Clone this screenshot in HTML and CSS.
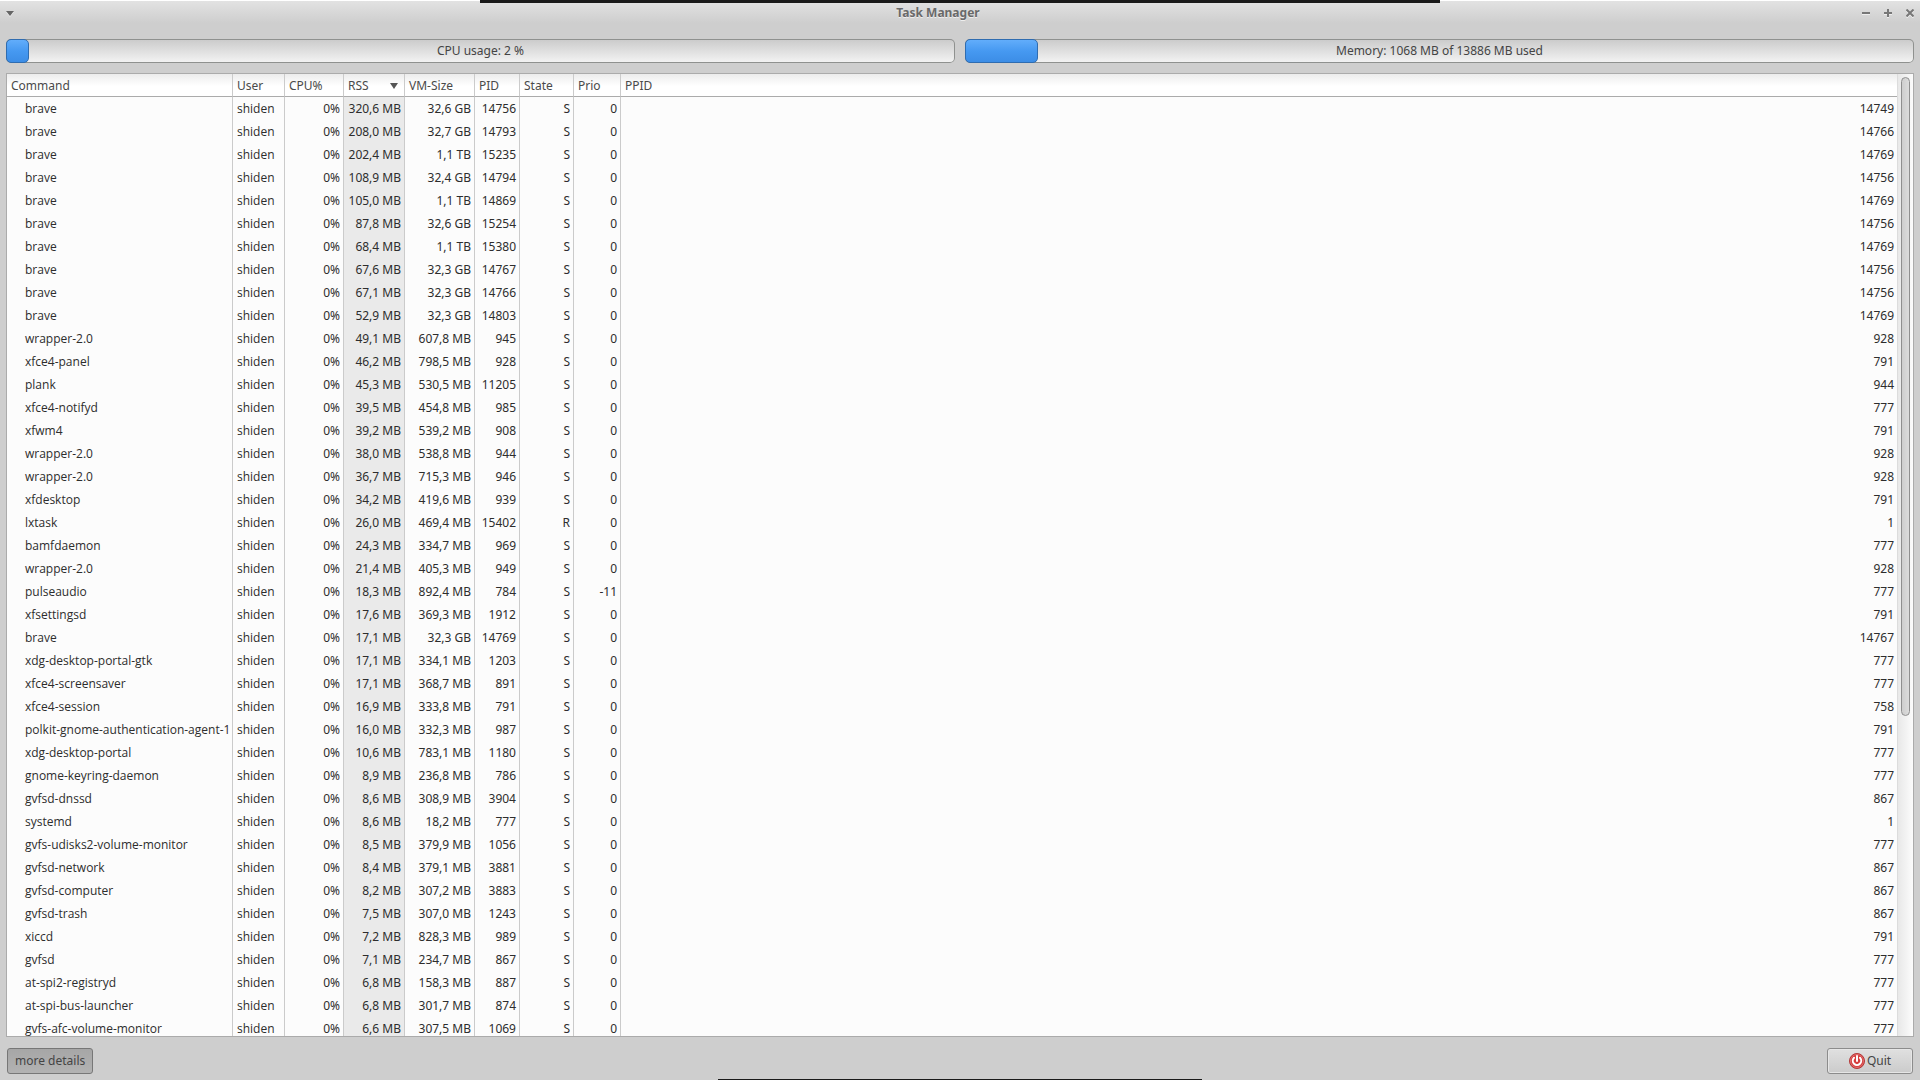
FILE: index.html
```html
<!DOCTYPE html>
<html lang="en">
<head>
<meta charset="utf-8">
<title>Task Manager</title>
<link rel="stylesheet" href="styles.css">
</head>
<body>
<div class="window">
  <header class="titlebar">
    <button class="tb-btn" aria-label="Window menu"><svg width="8" height="5" viewBox="0 0 8 5"><path d="M0 0h8L4 5z" fill="#666"/></svg></button>
    <h1 class="title">Task Manager</h1>
    <div class="tb-group">
      <button class="tb-btn" aria-label="Minimize"><svg width="8" height="8" viewBox="0 0 8 8"><path d="M0 4h8" stroke="#777" stroke-width="2"/></svg></button>
      <button class="tb-btn" aria-label="Maximize"><svg width="8" height="8" viewBox="0 0 8 8"><path d="M0 4h8M4 0v8" stroke="#777" stroke-width="2"/></svg></button>
      <button class="tb-btn" aria-label="Close"><svg width="8" height="8" viewBox="0 0 8 8"><path d="M.5.5l7 7M7.500.5l-7 7" stroke="#777" stroke-width="2"/></svg></button>
    </div>
  </header>
  <section class="meters">
    <div class="meter"><progress class="bar" id="cpu" max="100" value="2.4"></progress><label class="meter-label" for="cpu">CPU usage: 2 %</label></div>
    <div class="meter"><progress class="bar" id="mem" max="13886" value="1068"></progress><label class="meter-label" for="mem">Memory: 1068 MB of 13886 MB used</label></div>
  </section>
  <main class="list">
    <div class="list-view">
      <table class="procs">
        <colgroup><col class="c-cmd"><col class="c-user"><col class="c-cpu"><col class="c-rss"><col class="c-vm"><col class="c-pid"><col class="c-state"><col class="c-prio"><col></colgroup>
        <thead><tr><th>Command</th><th>User</th><th>CPU%</th><th><span class="sorted">RSS <svg width="8" height="6" viewBox="0 0 8 6"><path d="M0 0h8L4 6z" fill="#555"/></svg></span></th><th>VM-Size</th><th>PID</th><th>State</th><th>Prio</th><th>PPID</th></tr></thead>
        <tbody>
<tr><td>brave</td><td>shiden</td><td>0%</td><td>320,6 MB</td><td>32,6 GB</td><td>14756</td><td>S</td><td>0</td><td>14749</td></tr>
<tr><td>brave</td><td>shiden</td><td>0%</td><td>208,0 MB</td><td>32,7 GB</td><td>14793</td><td>S</td><td>0</td><td>14766</td></tr>
<tr><td>brave</td><td>shiden</td><td>0%</td><td>202,4 MB</td><td>1,1 TB</td><td>15235</td><td>S</td><td>0</td><td>14769</td></tr>
<tr><td>brave</td><td>shiden</td><td>0%</td><td>108,9 MB</td><td>32,4 GB</td><td>14794</td><td>S</td><td>0</td><td>14756</td></tr>
<tr><td>brave</td><td>shiden</td><td>0%</td><td>105,0 MB</td><td>1,1 TB</td><td>14869</td><td>S</td><td>0</td><td>14769</td></tr>
<tr><td>brave</td><td>shiden</td><td>0%</td><td>87,8 MB</td><td>32,6 GB</td><td>15254</td><td>S</td><td>0</td><td>14756</td></tr>
<tr><td>brave</td><td>shiden</td><td>0%</td><td>68,4 MB</td><td>1,1 TB</td><td>15380</td><td>S</td><td>0</td><td>14769</td></tr>
<tr><td>brave</td><td>shiden</td><td>0%</td><td>67,6 MB</td><td>32,3 GB</td><td>14767</td><td>S</td><td>0</td><td>14756</td></tr>
<tr><td>brave</td><td>shiden</td><td>0%</td><td>67,1 MB</td><td>32,3 GB</td><td>14766</td><td>S</td><td>0</td><td>14756</td></tr>
<tr><td>brave</td><td>shiden</td><td>0%</td><td>52,9 MB</td><td>32,3 GB</td><td>14803</td><td>S</td><td>0</td><td>14769</td></tr>
<tr><td>wrapper-2.0</td><td>shiden</td><td>0%</td><td>49,1 MB</td><td>607,8 MB</td><td>945</td><td>S</td><td>0</td><td>928</td></tr>
<tr><td>xfce4-panel</td><td>shiden</td><td>0%</td><td>46,2 MB</td><td>798,5 MB</td><td>928</td><td>S</td><td>0</td><td>791</td></tr>
<tr><td>plank</td><td>shiden</td><td>0%</td><td>45,3 MB</td><td>530,5 MB</td><td>11205</td><td>S</td><td>0</td><td>944</td></tr>
<tr><td>xfce4-notifyd</td><td>shiden</td><td>0%</td><td>39,5 MB</td><td>454,8 MB</td><td>985</td><td>S</td><td>0</td><td>777</td></tr>
<tr><td>xfwm4</td><td>shiden</td><td>0%</td><td>39,2 MB</td><td>539,2 MB</td><td>908</td><td>S</td><td>0</td><td>791</td></tr>
<tr><td>wrapper-2.0</td><td>shiden</td><td>0%</td><td>38,0 MB</td><td>538,8 MB</td><td>944</td><td>S</td><td>0</td><td>928</td></tr>
<tr><td>wrapper-2.0</td><td>shiden</td><td>0%</td><td>36,7 MB</td><td>715,3 MB</td><td>946</td><td>S</td><td>0</td><td>928</td></tr>
<tr><td>xfdesktop</td><td>shiden</td><td>0%</td><td>34,2 MB</td><td>419,6 MB</td><td>939</td><td>S</td><td>0</td><td>791</td></tr>
<tr><td>lxtask</td><td>shiden</td><td>0%</td><td>26,0 MB</td><td>469,4 MB</td><td>15402</td><td>R</td><td>0</td><td>1</td></tr>
<tr><td>bamfdaemon</td><td>shiden</td><td>0%</td><td>24,3 MB</td><td>334,7 MB</td><td>969</td><td>S</td><td>0</td><td>777</td></tr>
<tr><td>wrapper-2.0</td><td>shiden</td><td>0%</td><td>21,4 MB</td><td>405,3 MB</td><td>949</td><td>S</td><td>0</td><td>928</td></tr>
<tr><td>pulseaudio</td><td>shiden</td><td>0%</td><td>18,3 MB</td><td>892,4 MB</td><td>784</td><td>S</td><td>-11</td><td>777</td></tr>
<tr><td>xfsettingsd</td><td>shiden</td><td>0%</td><td>17,6 MB</td><td>369,3 MB</td><td>1912</td><td>S</td><td>0</td><td>791</td></tr>
<tr><td>brave</td><td>shiden</td><td>0%</td><td>17,1 MB</td><td>32,3 GB</td><td>14769</td><td>S</td><td>0</td><td>14767</td></tr>
<tr><td>xdg-desktop-portal-gtk</td><td>shiden</td><td>0%</td><td>17,1 MB</td><td>334,1 MB</td><td>1203</td><td>S</td><td>0</td><td>777</td></tr>
<tr><td>xfce4-screensaver</td><td>shiden</td><td>0%</td><td>17,1 MB</td><td>368,7 MB</td><td>891</td><td>S</td><td>0</td><td>777</td></tr>
<tr><td>xfce4-session</td><td>shiden</td><td>0%</td><td>16,9 MB</td><td>333,8 MB</td><td>791</td><td>S</td><td>0</td><td>758</td></tr>
<tr><td>polkit-gnome-authentication-agent-1</td><td>shiden</td><td>0%</td><td>16,0 MB</td><td>332,3 MB</td><td>987</td><td>S</td><td>0</td><td>791</td></tr>
<tr><td>xdg-desktop-portal</td><td>shiden</td><td>0%</td><td>10,6 MB</td><td>783,1 MB</td><td>1180</td><td>S</td><td>0</td><td>777</td></tr>
<tr><td>gnome-keyring-daemon</td><td>shiden</td><td>0%</td><td>8,9 MB</td><td>236,8 MB</td><td>786</td><td>S</td><td>0</td><td>777</td></tr>
<tr><td>gvfsd-dnssd</td><td>shiden</td><td>0%</td><td>8,6 MB</td><td>308,9 MB</td><td>3904</td><td>S</td><td>0</td><td>867</td></tr>
<tr><td>systemd</td><td>shiden</td><td>0%</td><td>8,6 MB</td><td>18,2 MB</td><td>777</td><td>S</td><td>0</td><td>1</td></tr>
<tr><td>gvfs-udisks2-volume-monitor</td><td>shiden</td><td>0%</td><td>8,5 MB</td><td>379,9 MB</td><td>1056</td><td>S</td><td>0</td><td>777</td></tr>
<tr><td>gvfsd-network</td><td>shiden</td><td>0%</td><td>8,4 MB</td><td>379,1 MB</td><td>3881</td><td>S</td><td>0</td><td>867</td></tr>
<tr><td>gvfsd-computer</td><td>shiden</td><td>0%</td><td>8,2 MB</td><td>307,2 MB</td><td>3883</td><td>S</td><td>0</td><td>867</td></tr>
<tr><td>gvfsd-trash</td><td>shiden</td><td>0%</td><td>7,5 MB</td><td>307,0 MB</td><td>1243</td><td>S</td><td>0</td><td>867</td></tr>
<tr><td>xiccd</td><td>shiden</td><td>0%</td><td>7,2 MB</td><td>828,3 MB</td><td>989</td><td>S</td><td>0</td><td>791</td></tr>
<tr><td>gvfsd</td><td>shiden</td><td>0%</td><td>7,1 MB</td><td>234,7 MB</td><td>867</td><td>S</td><td>0</td><td>777</td></tr>
<tr><td>at-spi2-registryd</td><td>shiden</td><td>0%</td><td>6,8 MB</td><td>158,3 MB</td><td>887</td><td>S</td><td>0</td><td>777</td></tr>
<tr><td>at-spi-bus-launcher</td><td>shiden</td><td>0%</td><td>6,8 MB</td><td>301,7 MB</td><td>874</td><td>S</td><td>0</td><td>777</td></tr>
<tr><td>gvfs-afc-volume-monitor</td><td>shiden</td><td>0%</td><td>6,6 MB</td><td>307,5 MB</td><td>1069</td><td>S</td><td>0</td><td>777</td></tr>
        </tbody>
      </table>
    </div>
    <div class="scroll"><div class="thumb"></div></div>
  </main>
  <footer class="actions">
    <button class="btn btn-toggled">more details</button>
    <button class="btn"><svg width="16" height="16" viewBox="0 0 16 16"><circle cx="8" cy="8" r="7.500" fill="#c33" stroke="#b33a3a"/><circle cx="8" cy="8" r="6.500" fill="#d63c3c" stroke="#e07070"/><path d="M5 4.800a4.200 4.200 0 1 0 6 0" fill="none" stroke="#fff" stroke-width="2" stroke-linecap="round"/><path d="M8 3v5" stroke="#fff" stroke-width="2" stroke-linecap="round"/></svg>Quit</button>
  </footer>
</div>
<div class="edge edge-top"></div>
<div class="edge edge-bottom"></div>
</body>
</html>
```
FILE: styles.css
```css
* { box-sizing: border-box; }

body {
  margin: 0;
  background: #cecece;
  color: #2d2d2d;
  font: 12px/16px "Noto Sans", sans-serif;
}

button { font: inherit; color: inherit; }
svg { display: block; flex: none; }

.window {
  display: flex;
  flex-direction: column;
  height: 100vh;
  border-top: 1px solid #fff;
  background: linear-gradient(#e2e2e2, #cecece 22px);
}

/* Title bar */
.titlebar {
  display: grid;
  grid-template-columns: auto 1fr auto;
  align-items: center;
  height: 22px;
  padding: 0 6px;
}
.title {
  margin: 0;
  color: #696969;
  font-size: 12px;
  line-height: 24px;
  text-align: center;
  text-shadow: 0 1px #eee;
}
.tb-btn {
  display: flex;
  width: 8px;
  padding: 0;
  border: 0;
  background: none;
  filter: drop-shadow(0 1px #eee);
}
.tb-group { display: flex; gap: 14px; }

/* Usage meters */
.meters {
  display: flex;
  gap: 10px;
  padding: 16px 6px 10px;
}
.meter { display: grid; flex: 1; }
.bar, .meter-label { grid-area: 1 / 1; }
.bar {
  appearance: none;
  width: 100%;
  height: 24px;
  border: 0;
  border-radius: 5px;
  background: none;
}
.bar::-webkit-progress-bar {
  border-radius: 5px;
  background: linear-gradient(#cacaca, #f4f4f4);
  box-shadow: inset 0 0 0 1px #8f918f;
}
.bar::-webkit-progress-value {
  border: 1px solid #2f6cb0;
  border-radius: 5px;
  background: linear-gradient(#62adfb, #4699f1 50%, #3c8de6);
}
.meter-label {
  z-index: 1;
  color: #444;
  line-height: 24px;
  text-align: center;
}

/* Process list */
.list {
  display: flex;
  flex: 1;
  min-height: 0;
  margin: 0 6px;
  border: 1px solid #ababab;
  background: #fcfcfc;
}
.list-view { flex: 1; overflow: hidden; }
.procs {
  width: 100%;
  table-layout: fixed;
  border-collapse: separate;
  border-spacing: 0;
}
.c-cmd { width: 226px; }
.c-user { width: 52px; }
.c-cpu { width: 59px; }
.c-rss { width: 61px; }
.c-vm { width: 70px; }
.c-pid { width: 45px; }
.c-state { width: 54px; }
.c-prio { width: 47px; }
th, td {
  height: 23px;
  padding: 0 3px 0 4px;
  border-right: 1px solid #cbcbcb;
  text-align: right;
  white-space: nowrap;
}
th {
  padding-top: 2px;
  border-bottom: 1px solid #ababab;
  background: linear-gradient(#ececec, #fff 12px);
  color: #4a4a4a;
  font-weight: 400;
  text-align: left;
}
th:last-child, td:last-child { border-right: 0; }
td:nth-child(-n+2) { text-align: left; font-family: "Open Sans", "Noto Sans", sans-serif; }
td:first-child { padding-left: 18px; padding-right: 0; }
td:nth-child(4) { background: #eaeaea; }
.sorted {
  display: flex;
  align-items: center;
  justify-content: space-between;
  padding-right: 3px;
}
.scroll {
  width: 16px;
  padding: 3px 3px 0;
  border-left: 1px solid #dcdcdc;
  background: linear-gradient(90deg, #e8e8e8, #fcfcfc);
}
.thumb {
  width: 9px;
  height: 66.6%;
  border: 1px solid #8f8f8f;
  border-radius: 5px;
  background: linear-gradient(90deg, #cecece, #dcdcdc);
}

/* Footer */
.actions {
  display: flex;
  justify-content: space-between;
  padding: 11px 7px 6px;
}
.btn {
  display: flex;
  align-items: center;
  justify-content: center;
  gap: 2px;
  min-width: 86px;
  height: 26px;
  padding: 0 7px;
  border: 1px solid #8c8c8c;
  border-radius: 3px;
  background: linear-gradient(#e0e0e0, #cbcbcb);
  box-shadow: inset 0 0 0 1px #e6e6e6;
  color: #444;
}
.btn-toggled {
  border-color: #777;
  background: linear-gradient(#a6a6a6, #b2b2b2);
  box-shadow: none;
}

/* Auto-hidden panels peeking from the screen edges */
.edge {
  position: fixed;
  left: 50%;
  transform: translateX(-50%);
  background: #1a1a1a;
}
.edge-top { top: 0; width: 50%; height: 3px; }
.edge-bottom { bottom: 0; width: 484px; height: 1px; }
```
